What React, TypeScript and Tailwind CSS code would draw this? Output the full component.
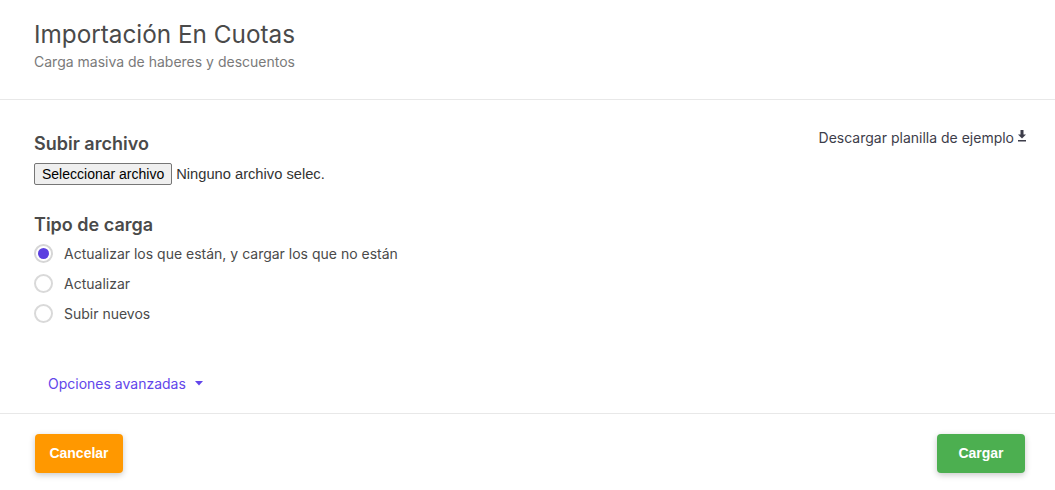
import React, { useState } from 'react';

const options = [
  { id: 'upsert', label: 'Actualizar los que están, y cargar los que no están' },
  { id: 'update', label: 'Actualizar' },
  { id: 'new', label: 'Subir nuevos' },
];

function Radio({ checked, label, onClick }: { checked: boolean; label: string; onClick: () => void }) {
  return (
    <button type="button" onClick={onClick} className="flex items-center gap-[11px] h-[30px] cursor-pointer text-left">
      <span
        className={`w-[19px] h-[19px] rounded-full border-2 flex items-center justify-center bg-white ${
          checked ? 'border-[#d6d6d6]' : 'border-[#d9d9d9]'
        }`}
      >
        {checked && <span className="w-[11px] h-[11px] rounded-full bg-[#5b3fe0]" />}
      </span>
      <span className="text-[14px] text-[#4a4a4a]">{label}</span>
    </button>
  );
}

export default function App() {
  const [tipo, setTipo] = useState('upsert');

  return (
    <div className="w-[1055px] h-[490px] bg-white font-['Inter',sans-serif] flex flex-col">
      {/* header */}
      <div className="px-[34px] pt-[19px] h-[100px] border-b border-[#e8e8e8]">
        <h1 className="text-[24.3px] leading-[30px] text-[#4a4a4a]">Importación En Cuotas</h1>
        <p className="mt-[4px] text-[14px] leading-[18px] text-[#7a7a7a]">Carga masiva de haberes y descuentos</p>
      </div>

      {/* body */}
      <div className="flex-1 px-[34px] pt-[33px] flex flex-col">
        <div className="flex justify-between">
          <div>
            <h2 className="text-[18px] leading-[22px] font-semibold text-[#4a4a4a]">Subir archivo</h2>
            <div className="mt-[8px] flex items-center gap-[4px] font-['Liberation_Sans',Arial,sans-serif]">
              <span className="h-[22px] px-[7px] flex items-center bg-[#efefef] border border-[#767676] rounded-[2px] text-[14px] text-black">
                Seleccionar archivo
              </span>
              <span className="text-[14.7px] text-[#333]">Ninguno archivo selec.</span>
            </div>
          </div>
          <a className="mt-[-6px] mr-[-6px] flex items-start gap-[3px] text-[14px] text-[#3d3d4a] cursor-pointer">
            Descargar planilla de ejemplo
            <svg width="10" height="12" viewBox="0 0 10 12" className="mt-[3px]" fill="currentColor">
              <path d="M3.5 0h3v4.5H9L5 8.5 1 4.5h2.5z" />
              <rect x="1" y="10" width="8" height="1.5" />
            </svg>
          </a>
        </div>

        <h2 className="mt-[29px] text-[18px] leading-[22px] font-semibold text-[#4a4a4a]">Tipo de carga</h2>
        <div className="mt-[2px] flex flex-col">
          {options.map(o => (
            <Radio key={o.id} checked={tipo === o.id} label={o.label} onClick={() => setTipo(o.id)} />
          ))}
        </div>

        <button type="button" className="mt-[45px] ml-[14px] flex items-center gap-[9px] text-[14px] text-[#6246ea] cursor-pointer self-start">
          Opciones avanzadas
          <svg width="8" height="5" viewBox="0 0 8 5" fill="currentColor">
            <path d="M0 0h8L4 4.5z" />
          </svg>
        </button>
      </div>

      {/* footer */}
      <div className="h-[77px] border-t border-[#e8e8e8] px-[35px] pt-[20px] flex justify-between items-start font-['Liberation_Sans',Arial,sans-serif]">
        <button type="button" className="w-[88px] h-[39px] rounded-[4px] bg-[#ff9800] text-white text-[14px] font-bold shadow-[0_2px_6px_rgba(0,0,0,0.22)] cursor-pointer">
          Cancelar
        </button>
        <button type="button" className="mr-[-5px] w-[88px] h-[39px] rounded-[4px] bg-[#4caf50] text-white text-[14px] font-bold shadow-[0_2px_6px_rgba(0,0,0,0.22)] cursor-pointer">
          Cargar
        </button>
      </div>
    </div>
  );
}
